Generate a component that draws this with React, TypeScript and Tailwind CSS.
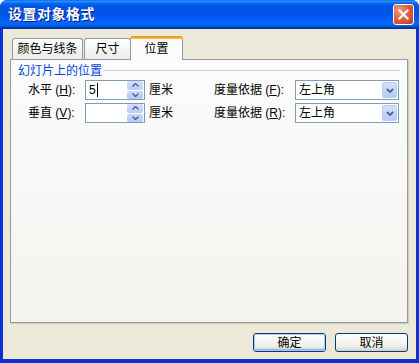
import React from 'react';

const font = "font-['Liberation_Sans','Noto_Sans_CJK_SC',sans-serif]";

const Mn: React.FC<{ k: string }> = ({ k }) => (
  <span>
    (<span className="underline underline-offset-1">{k}</span>):
  </span>
);

const SpinBox: React.FC<{ value?: string; caret?: boolean }> = ({ value, caret }) => (
  <div className="w-[60px] h-[20px] border border-[#7f9db9] bg-white flex items-center">
    <div className="flex-1 flex items-center pl-[3px] text-[12px] text-black leading-none">
      {value}
      {caret && <span className="w-px h-[14px] bg-black ml-[1px]"></span>}
    </div>
    <div className="w-[16px] h-[18px] mr-[1px] flex flex-col gap-px">
      <div className="flex-1 rounded-[2px] bg-[linear-gradient(to_bottom,#d4e0fc,#bacdf8)] flex items-center justify-center">
        <svg width="7" height="4" viewBox="0 0 7 4"><path d="M0.5 3.5 L3.5 0.5 L6.5 3.5" fill="none" stroke="#4d6185" strokeWidth="1.4" /></svg>
      </div>
      <div className="flex-1 rounded-[2px] bg-[linear-gradient(to_bottom,#c9d8fb,#b4c8f6)] flex items-center justify-center">
        <svg width="7" height="4" viewBox="0 0 7 4"><path d="M0.5 0.5 L3.5 3.5 L6.5 0.5" fill="none" stroke="#4d6185" strokeWidth="1.4" /></svg>
      </div>
    </div>
  </div>
);

const Combo: React.FC<{ value: string }> = ({ value }) => (
  <div className="w-[104px] h-[20px] border border-[#7f9db9] bg-white flex items-center">
    <div className="flex-1 pl-[3px] text-[12px] text-black">{value}</div>
    <div className="w-[15px] h-[16px] mr-[1px] rounded-[2px] border border-[#b9cbf3] bg-[linear-gradient(to_bottom,#d4e0fc,#b7cbf8)] flex items-center justify-center">
      <svg width="8" height="5" viewBox="0 0 8 5"><path d="M0.8 0.8 L4 4 L7.2 0.8" fill="none" stroke="#4d6185" strokeWidth="1.8" /></svg>
    </div>
  </div>
);

const Row: React.FC<{ label: string; k: string; value?: string; caret?: boolean; k2: string }> = ({ label, k, value, caret, k2 }) => (
  <div className="flex items-center h-[20px] text-[12px] text-black">
    <div className="w-[57px]">
      {label} <Mn k={k} />
    </div>
    <SpinBox value={value} caret={caret} />
    <div className="w-[69px] pl-[4px]">厘米</div>
    <div className="w-[81px]">
      度量依据 <Mn k={k2} />
    </div>
    <Combo value="左上角" />
  </div>
);

const Tab: React.FC<{ label: string; active?: boolean; className?: string }> = ({ label, active, className }) =>
  active ? (
    <div
      className={`relative z-10 -mb-px h-[24px] border-x border-[#919b9c] rounded-t-[3px] bg-[#fcfcfe] flex flex-col ${className ?? ''}`}
    >
      <div className="h-[3px] -mx-px rounded-t-[3px] bg-[linear-gradient(to_bottom,#e68b2c,#ffc73c)]"></div>
      <div className="flex-1 flex items-center justify-center text-[12px] text-black pb-[2px]">{label}</div>
    </div>
  ) : (
    <div
      className={`h-[21px] border border-b-0 border-[#919b9c] rounded-t-[3px] bg-[linear-gradient(to_bottom,#ffffff,#ecebe6)] flex items-center justify-center text-[12px] text-black ${className ?? ''}`}
    >
      {label}
    </div>
  );

const Button: React.FC<{ label: string; def?: boolean }> = ({ label, def }) => (
  <div className="w-[73px] h-[19px] rounded-[3px] border border-[#003c74] bg-[linear-gradient(to_bottom,#ffffff,#f0f0ea_70%,#d6d0c5)] flex items-center justify-center text-[12px] text-black">
    <div
      className={`w-full h-full rounded-[2px] flex items-center justify-center ${def ? 'shadow-[inset_0_0_0_1px_#b0c8f6,inset_0_-1px_0_1px_#8cb4f2]' : ''}`}
    >
      {label}
    </div>
  </div>
);

export default function App() {
  return (
    <div className={`w-[419px] h-[363px] flex flex-col bg-[#0831d9] rounded-t-[7px] overflow-hidden ${font}`}>
      <div className="h-[29px] shrink-0 flex items-center justify-between pl-[8px] pr-[5px] bg-[linear-gradient(to_bottom,#0058ee_0%,#3593ff_4%,#288eff_6%,#127dff_8%,#036ffc_10%,#0262ee_14%,#0057e5_20%,#0054e3_24%,#0055eb_56%,#005bf5_66%,#026afe_76%,#0062ef_86%,#0052d6_92%,#0040ab_94%,#003092_100%)]">
        <div className="text-white font-bold text-[14px] tracking-[0.5px] [text-shadow:1px_1px_0_#0a1883]">设置对象格式</div>
        <div className="w-[21px] h-[21px] rounded-[3px] border border-white bg-[radial-gradient(circle_at_30%_30%,#f0a080,#e0623f_45%,#c2391c)] flex items-center justify-center">
          <svg width="11" height="11" viewBox="0 0 11 11">
            <path d="M1.5 1.5 L9.5 9.5 M9.5 1.5 L1.5 9.5" stroke="white" strokeWidth="2.2" strokeLinecap="square" />
          </svg>
        </div>
      </div>
      <div className="flex-1 mx-[3px] mb-[4px] bg-[#ece9d8] flex flex-col pt-[7px] pl-[7px] pr-[8px] pb-[7px]">
        <div className="flex items-end h-[23px] pl-[2px]">
          <Tab label="颜色与线条" className="w-[71px]" />
          <Tab label="尺寸" className="w-[47px] ml-[1px]" />
          <Tab label="位置" active className="w-[53px] -ml-px" />
        </div>
        <div className="flex-1 border border-[#919b9c] shadow-[1px_1px_0_#d0cdc0] bg-[linear-gradient(to_bottom,#fcfcfe,#f4f3ee)] flex flex-col pt-[3px] pl-[7px] pr-[7px]">
          <div className="flex items-center h-[15px] text-[12px] text-[#0046d5]">
            <span>幻灯片上的位置</span>
            <div className="flex-1 h-px bg-[#d0d0bf] ml-[2px]"></div>
          </div>
          <div className="flex flex-col gap-[3px] pl-[10px] mt-[2px]">
            <Row label="水平" k="H" value="5" caret k2="F" />
            <Row label="垂直" k="V" k2="R" />
          </div>
        </div>
        <div className="flex justify-end gap-[9px] mt-[10px]">
          <Button label="确定" def />
          <Button label="取消" />
        </div>
      </div>
    </div>
  );
}
